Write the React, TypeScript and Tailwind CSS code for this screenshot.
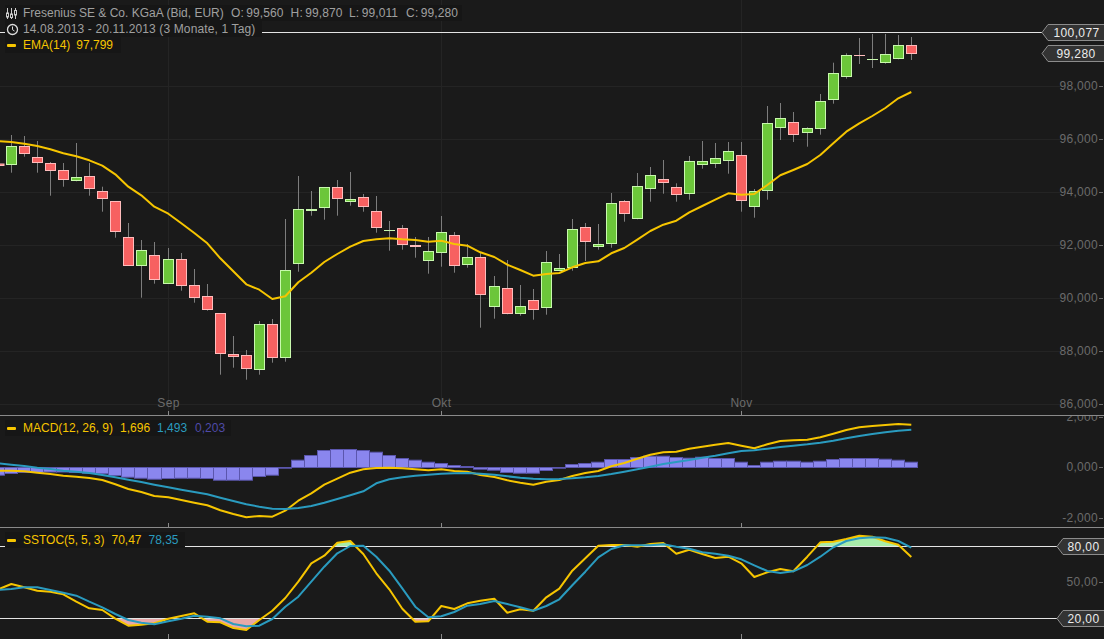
import React from "react";

// [wick top, wick bottom, body top, body bottom, up]
type Candle = [number, number, number, number, boolean];

const candles: Candle[] = [
  [135, 172.7, 146.3, 165.3, true], [136, 156.7, 146.3, 153.7, false], [141, 172.7, 157.3, 163.3, false],
  [162, 195.7, 163.3, 170.7, false], [163, 186.7, 170.3, 179.7, false], [143, 181.3, 177.3, 181.3, true],
  [163, 195.7, 176.3, 188.7, false], [186.7, 211.7, 191.3, 199.3, false], [201.3, 237.7, 201.3, 232.3, false],
  [223, 265.7, 237.3, 265.7, false], [240, 297.7, 250.3, 265.7, true], [242, 283.7, 255.3, 279.7, false],
  [248, 283.7, 259.3, 283.7, true], [253, 290.7, 259.3, 286.3, false], [269, 302.7, 285.3, 297.7, false],
  [284, 310.7, 296.3, 310.3, false], [313.3, 374.7, 313.3, 354.3, false], [336, 367.7, 354.3, 356.7, false],
  [350, 379.7, 355.3, 369.3, false], [321, 374.7, 324.3, 370.3, true], [319, 362.7, 324.3, 357.7, false],
  [219, 361.7, 270.3, 357.7, true], [176, 271.7, 209.3, 264.3, true], [191, 215.7, 209.3, 210.7, true],
  [187.3, 219.7, 187.3, 208.3, true], [180, 215.7, 187.3, 199.3, false], [172, 205.7, 199.3, 201.7, true],
  [194, 211.7, 197.3, 207.3, false], [196, 232.7, 211.3, 228.3, false], [221, 250.7, 230, 230.7, true],
  [225, 249.7, 228.3, 245.3, false], [237, 257.7, 245.3, 247.3, false], [237, 273.7, 251.3, 261.3, true],
  [216, 266.7, 232.3, 253.3, true], [232, 272.7, 235.3, 266.3, false], [244, 267.7, 257.3, 265.3, true],
  [253, 327.7, 257.3, 295.3, false], [276, 318.7, 286.3, 307.3, true], [260, 314.3, 288.3, 314.3, false],
  [285, 315.7, 306.3, 314.3, true], [289, 319.7, 300.3, 310.3, false], [251, 314.7, 262.3, 308.3, true],
  [254, 270.7, 268.3, 271.3, true], [219, 270.7, 229.3, 268.3, true], [223, 261, 227.3, 241.7, false],
  [224, 249.7, 244.3, 246.7, true], [193, 247.7, 203.3, 243.7, true], [200, 221.7, 201.3, 213.7, false],
  [173, 219.3, 186.3, 219.3, true], [167, 201.7, 175.3, 189.3, true], [160, 193.7, 179.3, 182.7, false],
  [183.3, 201.7, 187.3, 195.3, false], [156, 199.7, 161.3, 194.3, true], [141, 168.7, 161.3, 165.3, true],
  [143, 168, 158.3, 164.3, true], [142, 173.7, 151.3, 161.3, true], [142, 211.7, 155.3, 201.3, false],
  [189, 217.7, 191.3, 207.3, true], [106, 199.7, 123.3, 191.3, true], [103, 140, 118.3, 128.3, true],
  [112, 142, 122.3, 135.3, false], [127.3, 146.7, 128.3, 132.7, true], [94, 134.7, 101.3, 129.3, true],
  [62.7, 103.7, 73.3, 100.3, true], [53.3, 78.7, 55.3, 76.7, true], [38, 64, 55, 55.7, false],
  [34, 68, 59.3, 60, true], [34, 63.7, 54.3, 63.3, true], [35, 59.3, 45.3, 59.3, true], [37, 60, 45.3, 53.7, false],
];

// index -1 is the candle cut off by the left edge
const xAt = (i: number) => 11.3 + 13 * i + (i >= 12 ? 1 : 0) + (i >= 37 ? 1 : 0) + (i >= 61 ? 1 : 0);

const ema = [141, 142, 143.7, 146, 149.3, 153.3, 156.3, 160.3, 165.7, 174.3, 186.7, 195.3, 206.7, 213.7, 223.3, 233, 243.3, 258.3, 271.3, 284.3, 289.7, 299, 296.3, 282.3, 272.7, 262, 254, 246.7, 241, 239.3, 238.3, 239.3, 240, 241.7, 240.7, 244, 245.7, 252.3, 257, 264.7, 270, 275.7, 274, 273, 267.3, 263, 261.3, 253.3, 248, 239.7, 231, 224.7, 220.7, 212.3, 206, 199.7, 193.3, 194.7, 194, 185, 175.3, 170, 164, 155, 143.3, 131.7, 123.3, 116, 108, 98.3, 92];

const macdLine = [470.7, 470.7, 471.3, 472.7, 474, 475.7, 476.7, 478, 480, 484.3, 489, 492, 496, 497.3, 500, 502.7, 505.3, 510.3, 514, 517.3, 516, 516.7, 510.7, 500.7, 493.3, 484.7, 478.7, 472.7, 469.3, 468, 467.7, 468.3, 469.3, 470.3, 469.3, 471, 471.7, 475, 477, 480.3, 482.7, 484.7, 481.7, 480, 476, 473, 471, 466.3, 463, 458.7, 454.7, 452.3, 451.7, 448.7, 446.7, 444.7, 443, 445.7, 448.3, 444.3, 441, 440.3, 439.7, 437.3, 433.7, 430, 427.3, 426, 425, 424, 424.7];
const macdSignal = [463.3, 464.7, 466, 467.7, 469, 470.7, 471.7, 473, 475, 477.3, 479.7, 482, 484.7, 487.3, 489.7, 492, 494.3, 497.7, 501, 504.3, 506.7, 508.7, 509, 508, 506, 502.7, 499, 495.3, 491.3, 483.3, 479.3, 477.3, 475.7, 474.7, 473.7, 473.3, 473, 473.7, 474.7, 476.3, 477.7, 478.7, 479.3, 479, 478.3, 477.3, 476, 474, 471.7, 469.3, 466.7, 464, 462, 460, 457.7, 455.7, 453.3, 451, 450.3, 448.7, 447, 445.7, 444.3, 442.7, 440.7, 438.3, 436, 434, 432.3, 430.7, 429.7];
// histogram heights in px from the zero line, from index -1
const macdHist = [-7.7, -6, -5, -5, -4.5, -4.5, -5, -5.7, -6.3, -8, -9.7, -10.7, -11.7, -11, -10.7, -10.7, -11, -12.7, -12.7, -12.7, -9, -7.7, -0.7, 7.3, 12, 17, 18, 18, 17, 15.3, 12, 9, 7.3, 5.3, 4, 2, 1, -1.7, -2.7, -5, -5.7, -5.7, -3, -0.7, 3, 4, 5.3, 8, 8, 10, 11.3, 11.3, 10, 9.3, 10.3, 9, 9, 5.3, 2, 5.3, 6.3, 6.3, 5.3, 6.3, 8, 9, 9, 9, 8.3, 7.3, 5.3];

const stochK = [589.3, 584, 587.3, 590.7, 591.7, 594.3, 601.7, 608.3, 610, 618.7, 625.7, 624.7, 623.3, 618.7, 616, 613.3, 621.7, 622.3, 628, 630, 620, 610.7, 598, 581.7, 563.3, 555.7, 542.7, 541, 554, 573.3, 589.3, 608.7, 621.7, 621.3, 606, 609, 603.3, 600.7, 598.7, 612.7, 609.3, 610.7, 597.3, 588.7, 570.7, 558.3, 545.7, 545, 545, 546.7, 544, 543, 553.7, 549.7, 554, 558, 556.7, 563.3, 577, 572.3, 569, 571.3, 556.7, 542.3, 541.7, 539, 535.7, 536.7, 541.3, 544.7, 557];
const stochD = [590, 589, 587.3, 587.3, 590, 592.7, 595.7, 601.7, 607.3, 614, 620, 622.7, 624.3, 621.3, 618.7, 615.7, 616.7, 618.3, 624, 626.3, 625.7, 619, 606.7, 596.7, 581.7, 566.7, 553.3, 546, 545.7, 556.7, 570.7, 588.3, 606.7, 617.3, 616.3, 612, 605.7, 604, 601, 604, 607.3, 610.7, 606, 599.3, 585.3, 571.7, 557.3, 549, 545.3, 545.3, 545.3, 544.3, 546.7, 548.7, 552.3, 553.7, 555.7, 559.3, 565.3, 571, 573, 571.3, 565, 556.7, 547.3, 541, 538.3, 537.3, 537.7, 541, 547.7];

const pts = (ys: number[]) => ys.map((y, k) => `${xAt(k - 1).toFixed(1)},${y}`).join(" ");

const YELLOW = "#f6c500";
const BLUE = "#2a9bbf";
const months = [168.5, 441.5, 741.5];

function AxisLabel({ y, text }: { y: number; text: string }) {
  return (
    <g>
      <text x={1098} y={y + 4} textAnchor="end" fill="#6b6b6b" fontSize={12} letterSpacing={0.3}>{text}</text>
      <line x1={1099} x2={1103} y1={y + 0.5} y2={y + 0.5} stroke="#6b6b6b" />
    </g>
  );
}

function PriceTag({ y, left, text, cx }: { y: number; left: number; text: string; cx: number }) {
  return (
    <g>
      <polygon points={`${left},${y} ${left + 6},${y - 8} 1105,${y - 8} 1105,${y + 8} ${left + 6},${y + 8}`} fill="#333333" stroke="#8c8c8c" />
      <text x={cx} y={y + 4.5} textAnchor="middle" fill="#ececec" fontSize={12} letterSpacing={0.4}>{text}</text>
    </g>
  );
}

function MonthTicks({ y1, y2 }: { y1: number; y2: number }) {
  return (
    <>
      {months.map(x => <line key={x} x1={x} x2={x} y1={y1} y2={y2} stroke="#8a8a8a" />)}
    </>
  );
}

function LegendRow({ children, width }: { children: React.ReactNode; width: string }) {
  return <div className={`flex h-4 items-center whitespace-nowrap bg-[#161616] ${width}`}>{children}</div>;
}

function Dash() {
  return <span className="ml-[2px] mr-[7px] h-[3px] w-[9px] shrink-0 rounded-[1px] bg-[#f6c500]" />;
}

function MainPanel() {
  return (
    <div className="relative h-[415px] shrink-0">
      <svg width={1104} height={415} viewBox="0 0 1104 415" className="block" fontFamily="'Liberation Sans', Arial, sans-serif">
        {[86.5, 139.5, 192.5, 245.5, 298.5, 351.5, 404.5].map(y => (
          <line key={y} x1={0} x2={1060} y1={y} y2={y} stroke="#242424" />
        ))}
        {months.map(x => <line key={x} x1={x} x2={x} y1={0} y2={415} stroke="#242424" />)}

        <rect x={-6} y={164} width={10} height={1.5} fill="#f76161" stroke="#ffbcbc" />
        {candles.map((c, i) => {
          const x = xAt(i);
          const wx = Math.floor(x) + 0.5;
          const top = Math.round(c[2]) + 0.5;
          const bottom = Math.max(top + 0.01, Math.round(c[3]) - 0.5);
          return (
            <g key={i}>
              <line x1={wx} x2={wx} y1={c[0]} y2={c[1]} stroke="#7d7d7d" />
              <rect x={wx - 5} y={top} width={10} height={bottom - top} fill={c[4] ? "#6cc63a" : "#f76161"} stroke={c[4] ? "#c8f9ad" : "#ffbcbc"} />
            </g>
          );
        })}
        <polyline points={pts(ema)} fill="none" stroke={YELLOW} strokeWidth={2} strokeLinejoin="round" />

        <line x1={0} x2={1042} y1={32.5} y2={32.5} stroke="#e4e4e4" />
        <PriceTag y={32.5} left={1042} text="100,077" cx={1076.5} />
        <PriceTag y={53.5} left={1042} text="99,280" cx={1076} />
        <AxisLabel y={86} text="98,000" />
        <AxisLabel y={139} text="96,000" />
        <AxisLabel y={192} text="94,000" />
        <AxisLabel y={245} text="92,000" />
        <AxisLabel y={298} text="90,000" />
        <AxisLabel y={351} text="88,000" />
        <AxisLabel y={404} text="86,000" />

        <text x={168.5} y={407} textAnchor="middle" fill="#6b6b6b" fontSize={12} letterSpacing={0.3}>Sep</text>
        <text x={441.5} y={407} textAnchor="middle" fill="#6b6b6b" fontSize={12} letterSpacing={0.3}>Okt</text>
        <text x={741.5} y={407} textAnchor="middle" fill="#6b6b6b" fontSize={12} letterSpacing={0.3}>Nov</text>
        <MonthTicks y1={411} y2={415} />
      </svg>

      <div className="absolute left-[5px] top-[5px] flex flex-col text-[12px] leading-4 text-[#a0a0a0]">
        <LegendRow width="w-[457px]">
          <svg width={13} height={13} viewBox="0 0 13 13" className="ml-[1px] mr-[4px] shrink-0" fill="none" stroke="#cccccc">
            <path d="M1.5 1v11M5.5 1v11M9.5 1v11" />
            <rect x={0.5} y={6} width={2} height={4} fill="#1a1a1a" />
            <rect x={4.5} y={7} width={2} height={3.5} fill="#1a1a1a" />
            <rect x={8.5} y={3.5} width={2} height={4.5} fill="#1a1a1a" />
          </svg>
          <span className="w-[201px]">Fresenius SE &amp; Co. KGaA (Bid, EUR)</span>
          <span className="ml-[7px] tracking-[0.1px] [word-spacing:-1px]">O: 99,560</span>
          <span className="ml-[7px] tracking-[0.1px] [word-spacing:-1px]">H: 99,870</span>
          <span className="ml-[6.5px] tracking-[0.1px] [word-spacing:-1px]">L: 99,011</span>
          <span className="ml-[8px] tracking-[0.1px] [word-spacing:-1px]">C: 99,280</span>
        </LegendRow>
        <LegendRow width="w-[257px]">
          <svg width={13} height={13} viewBox="0 0 13 13" className="ml-[1px] mr-[4px] shrink-0" fill="none" stroke="#dddddd">
            <circle cx={6.5} cy={6.5} r={5} strokeWidth={1.3} />
            <path d="M6.5 3.5v3.2l2 1.3" />
          </svg>
          <span className="tracking-[0.13px]">14.08.2013 - 20.11.2013 (3 Monate, 1 Tag)</span>
        </LegendRow>
        <LegendRow width="w-[116px]">
          <Dash />
          <span className="text-[#f6c500]">EMA(14)</span>
          <span className="ml-[6px] text-[#f6c500]">97,799</span>
        </LegendRow>
      </div>
    </div>
  );
}

function MacdPanel() {
  return (
    <div className="relative h-[112px] shrink-0 border-t border-[#8a8a8a]">
      <svg width={1104} height={111} viewBox="0 416 1104 111" className="block" fontFamily="'Liberation Sans', Arial, sans-serif">
        {macdHist.map((h, k) => {
          const i = k - 1;
          const x0 = Math.floor(xAt(i)) - 6.5;
          const x1 = Math.floor(xAt(i + 1)) - 6.5;
          const zero = 467.5;
          const y = h > 0 ? zero - h : zero;
          return <rect key={k} x={x0} y={y} width={x1 - x0} height={Math.abs(h)} fill="#8a86ee" stroke="#5b56ad" />;
        })}
        <polyline points={pts(macdLine)} fill="none" stroke={YELLOW} strokeWidth={2} strokeLinejoin="round" />
        <polyline points={pts(macdSignal)} fill="none" stroke={BLUE} strokeWidth={2} strokeLinejoin="round" />
        <AxisLabel y={417} text="2,000" />
        <AxisLabel y={467} text="0,000" />
        <AxisLabel y={518} text="-2,000" />
        <MonthTicks y1={523} y2={527} />
      </svg>
      <div className="absolute left-[5px] top-[4px] text-[12px] leading-4">
        <LegendRow width="w-[226px]">
          <Dash />
          <span className="text-[#f6c500]">MACD(12, 26, 9)</span>
          <span className="ml-[7px] text-[#f6c500]">1,696</span>
          <span className="ml-[7px] text-[#2a9bbf]">1,493</span>
          <span className="ml-[8px] text-[#4f4aa8]">0,203</span>
        </LegendRow>
      </div>
    </div>
  );
}

function StochPanel() {
  const edge = `${xAt(-1)},546.5 ${pts(stochK)} ${xAt(69)},546.5`;
  const edgeLow = `${xAt(-1)},618.5 ${pts(stochK)} ${xAt(69)},618.5`;
  return (
    <div className="relative flex-1 border-t border-[#8a8a8a]">
      <svg width={1104} height={111} viewBox="0 528 1104 111" className="block" fontFamily="'Liberation Sans', Arial, sans-serif">
        <defs>
          <clipPath id="stochHigh"><rect x={0} y={528} width={1104} height={18.5} /></clipPath>
          <clipPath id="stochLow"><rect x={0} y={618.5} width={1104} height={20.5} /></clipPath>
        </defs>
        <polygon points={edge} fill="#a8ecaa" clipPath="url(#stochHigh)" />
        <polygon points={edgeLow} fill="#e8a8a8" clipPath="url(#stochLow)" />
        <line x1={0} x2={1057} y1={546.5} y2={546.5} stroke="#e4e4e4" />
        <line x1={0} x2={1057} y1={618.5} y2={618.5} stroke="#e4e4e4" />
        <polyline points={pts(stochK)} fill="none" stroke={YELLOW} strokeWidth={2} strokeLinejoin="round" />
        <polyline points={pts(stochD)} fill="none" stroke={BLUE} strokeWidth={2} strokeLinejoin="round" />
        <PriceTag y={546.5} left={1057} text="80,00" cx={1083.5} />
        <AxisLabel y={582} text="50,00" />
        <PriceTag y={618.5} left={1057} text="20,00" cx={1083.5} />
        <MonthTicks y1={634} y2={639} />
      </svg>
      <div className="absolute left-[5px] top-[4px] text-[12px] leading-4">
        <LegendRow width="w-[180px]">
          <Dash />
          <span className="text-[#f6c500] [word-spacing:-0.5px]">SSTOC(5, 5, 3)</span>
          <span className="ml-[7px] text-[#f6c500]">70,47</span>
          <span className="ml-[7px] text-[#2a9bbf]">78,35</span>
        </LegendRow>
      </div>
    </div>
  );
}

export default function App() {
  return (
    <div className="flex h-[639px] w-[1104px] flex-col overflow-hidden bg-[#1a1a1a] font-['Liberation_Sans',Arial,sans-serif]">
      <MainPanel />
      <MacdPanel />
      <StochPanel />
    </div>
  );
}
